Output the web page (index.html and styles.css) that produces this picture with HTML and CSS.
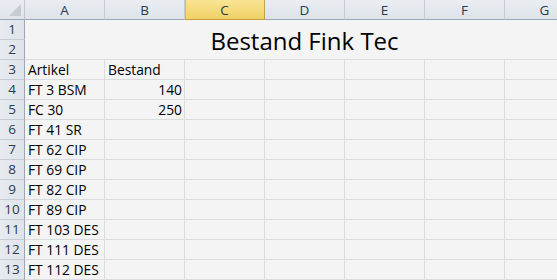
FILE: index.html
```html
<!DOCTYPE html>
<html lang="de">
<head>
<meta charset="utf-8">
<title>Bestand Fink Tec</title>
<link rel="stylesheet" href="styles.css">
</head>
<body>
<div class="frame">
<div class="sheet">
  <div class="corner"><span class="tri"></span></div>
  <div class="colh">A</div>
  <div class="colh">B</div>
  <div class="colh sel">C</div>
  <div class="colh">D</div>
  <div class="colh">E</div>
  <div class="colh">F</div>
  <div class="colh">G</div>

  <div class="rowh">1</div>
  <div class="title">Bestand Fink Tec</div>
  <div class="rowh">2</div>

  <div class="rowh">3</div><div class="c">Artikel</div><div class="c">Bestand</div><div class="c"></div><div class="c"></div><div class="c"></div><div class="c"></div><div class="c"></div>
  <div class="rowh">4</div><div class="c">FT 3 BSM</div><div class="c num">140</div><div class="c"></div><div class="c"></div><div class="c"></div><div class="c"></div><div class="c"></div>
  <div class="rowh">5</div><div class="c">FC 30</div><div class="c num">250</div><div class="c"></div><div class="c"></div><div class="c"></div><div class="c"></div><div class="c"></div>
  <div class="rowh">6</div><div class="c">FT 41 SR</div><div class="c"></div><div class="c"></div><div class="c"></div><div class="c"></div><div class="c"></div><div class="c"></div>
  <div class="rowh">7</div><div class="c">FT 62 CIP</div><div class="c"></div><div class="c"></div><div class="c"></div><div class="c"></div><div class="c"></div><div class="c"></div>
  <div class="rowh">8</div><div class="c">FT 69 CIP</div><div class="c"></div><div class="c"></div><div class="c"></div><div class="c"></div><div class="c"></div><div class="c"></div>
  <div class="rowh">9</div><div class="c">FT 82 CIP</div><div class="c"></div><div class="c"></div><div class="c"></div><div class="c"></div><div class="c"></div><div class="c"></div>
  <div class="rowh">10</div><div class="c">FT 89 CIP</div><div class="c"></div><div class="c"></div><div class="c"></div><div class="c"></div><div class="c"></div><div class="c"></div>
  <div class="rowh">11</div><div class="c">FT 103 DES</div><div class="c"></div><div class="c"></div><div class="c"></div><div class="c"></div><div class="c"></div><div class="c"></div>
  <div class="rowh">12</div><div class="c">FT 111 DES</div><div class="c"></div><div class="c"></div><div class="c"></div><div class="c"></div><div class="c"></div><div class="c"></div>
  <div class="rowh">13</div><div class="c">FT 112 DES</div><div class="c"></div><div class="c"></div><div class="c"></div><div class="c"></div><div class="c"></div><div class="c"></div>
</div>
</div>
</body>
</html>
```

FILE: styles.css
```css
html, body {
  margin: 0;
  padding: 0;
  background: #f4f4f4;
  overflow: hidden;
}
.frame {
  width: 557px;
  height: 280px;
  overflow: hidden;
}
.sheet {
  display: grid;
  grid-template-columns: 25px repeat(7, 80px);
  grid-auto-rows: 20px;
  width: 585px;
  font-family: "Open Sans", "Noto Sans", sans-serif;
  font-size: 13.8px;
  color: #000;
}
.corner {
  background: linear-gradient(#e9edf2, #dfe4ea);
  border-right: 1px solid #c0c7d0;
  border-bottom: 1px solid #9ba7b5;
  position: relative;
  box-sizing: border-box;
}
.tri {
  position: absolute;
  right: 3px;
  bottom: 3px;
  width: 0;
  height: 0;
  border-left: 12px solid transparent;
  border-bottom: 12px solid #c8ccd2;
}
.colh {
  box-sizing: border-box;
  background: linear-gradient(#eaeef3, #dde2e9);
  border-right: 1px solid #c5cbd3;
  border-bottom: 1px solid #9ba7b5;
  display: flex;
  align-items: center;
  justify-content: center;
  color: #2c3a4d;
  font-size: 13.5px;
}
.colh.sel {
  background: linear-gradient(#f9e494, #f0d265);
  border-right: 1px solid #c4a24a;
  border-bottom: 1px solid #c39d3e;
  box-shadow: inset 1px 0 0 #d9b860;
}
.rowh {
  box-sizing: border-box;
  background: linear-gradient(90deg, #e7ebf0, #dfe4ea);
  border-right: 1px solid #9ba7b5;
  border-bottom: 1px solid #c5cbd3;
  display: flex;
  align-items: flex-end;
  justify-content: center;
  padding-bottom: 1px;
  color: #2c3a4d;
  font-size: 13.5px;
  line-height: 17px;
}
.title {
  grid-column: 2 / 9;
  grid-row: 2 / 4;
  box-sizing: border-box;
  border-right: 1px solid #dadcdd;
  border-bottom: 1px solid #dadcdd;
  display: flex;
  align-items: flex-end;
  justify-content: center;
  font-size: 24px;
  line-height: 30px;
  padding-bottom: 3px;
}
.c {
  box-sizing: border-box;
  border-right: 1px solid #dadcdd;
  border-bottom: 1px solid #dadcdd;
  padding: 0 2px 0 3px;
  display: flex;
  align-items: flex-end;
  line-height: 17px;
  padding-bottom: 1px;
  white-space: nowrap;
}
.c.num {
  justify-content: flex-end;
}
```
